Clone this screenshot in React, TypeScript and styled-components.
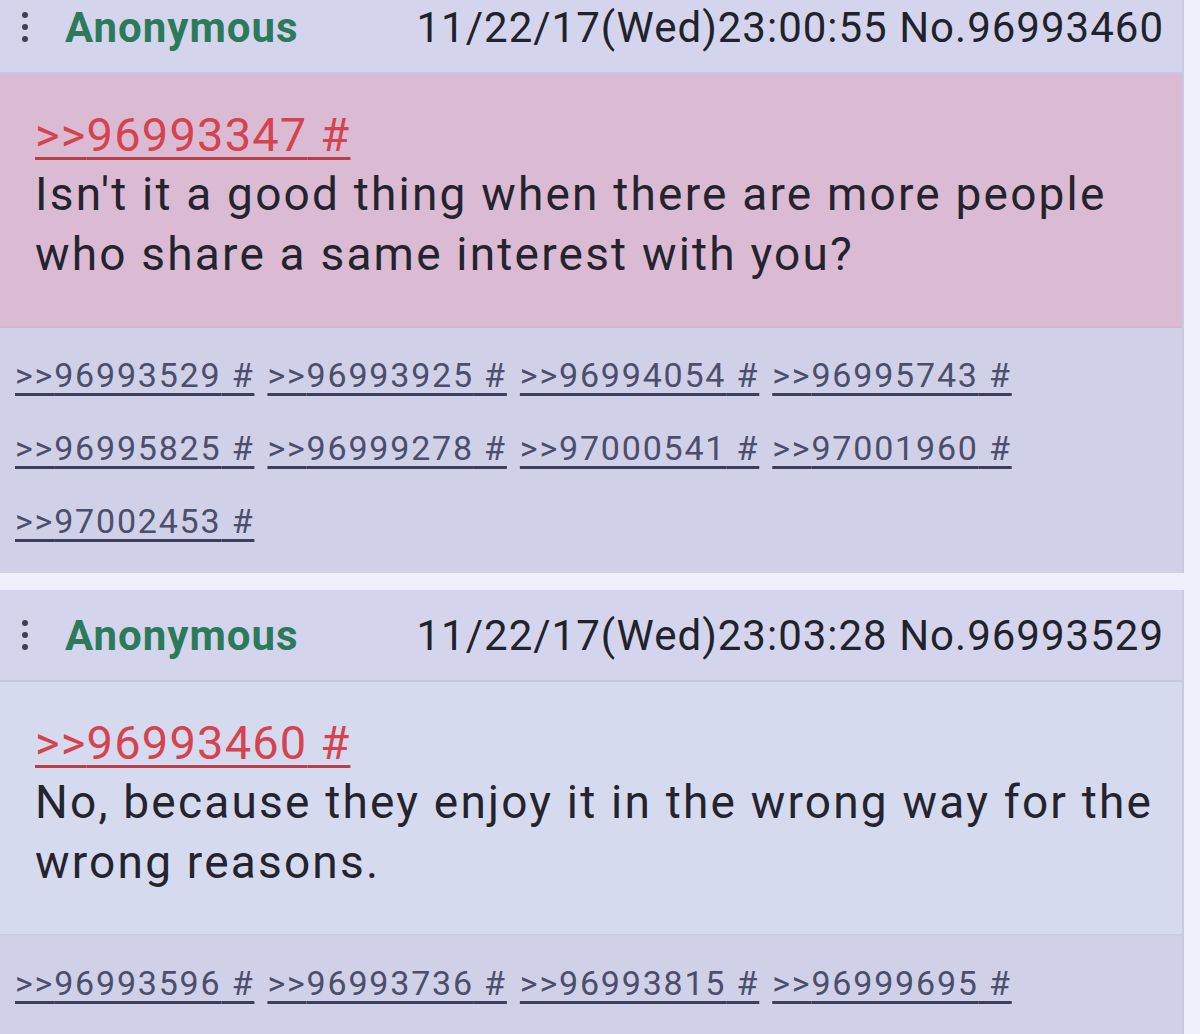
import React from 'react';
import styled, { createGlobalStyle } from 'styled-components';

const GlobalStyle = createGlobalStyle`
	html, body {
		margin: 0;
		padding: 0;
		background: #eef0fb;
		font-family: Roboto, 'Liberation Sans', Arial, sans-serif;
		overflow: hidden;
	}
`;

interface Post {
	id: number;
	time: string;
	quote: number;
	text: string;
	replies: number[];
	highlighted?: boolean;
}

const posts: Post[] = [
	{
		id: 96993460,
		time: '11/22/17(Wed)23:00:55',
		quote: 96993347,
		text: "Isn't it a good thing when there are more people who share a same interest with you?",
		replies: [
			96993529, 96993925, 96994054, 96995743, 96995825, 96999278, 97000541, 97001960, 97002453,
		],
		highlighted: true,
	},
	{
		id: 96993529,
		time: '11/22/17(Wed)23:03:28',
		quote: 96993460,
		text: 'No, because they enjoy it in the wrong way for the wrong reasons.',
		replies: [96993596, 96993736, 96993815, 96999695],
	},
];

// thread view is scrolled a little, so the first header is cut at the top
const Feed = styled.div`
	display: flex;
	flex-direction: column;
	gap: 17px;
	width: 1184px;
	margin-top: -18px;
`;

const Card = styled.article`
	display: flex;
	flex-direction: column;
	border-right: 2px solid #c9c9e0;
`;

const Header = styled.header`
	display: flex;
	align-items: center;
	justify-content: space-between;
	height: 90px;
	padding: 0 18px 0 22px;
	background: #d4d5ed;
	border-bottom: 2px solid #c6c8e2;
`;

const Author = styled.div`
	display: flex;
	align-items: center;
	gap: 37px;
`;

const Dots = styled.span`
	display: flex;
	flex-direction: column;
	gap: 6px;

	i {
		display: block;
		width: 6px;
		height: 6px;
		border-radius: 50%;
		background: #3f3f52;
	}
`;

const Name = styled.span`
	font-size: 42px;
	font-weight: 700;
	color: #2c7a5c;
	letter-spacing: 1px;
`;

const Meta = styled.span`
	font-size: 42px;
	color: #22222c;
	letter-spacing: 1px;
`;

const Body = styled.div<{ $highlighted?: boolean }>`
	display: flex;
	flex-direction: column;
	align-items: flex-start;
	min-height: 254px;
	box-sizing: border-box;
	padding: 34px 18px 30px 35px;
	background: ${(p) => (p.$highlighted ? '#dbbbd3' : '#d6daee')};
	border-bottom: 2px solid ${(p) => (p.$highlighted ? '#d3b6cf' : '#c8cbe3')};
`;

const QuoteLink = styled.a`
	font-size: 47px;
	line-height: 54px;
	color: #d4434f;
	letter-spacing: 1.2px;
	text-decoration: underline;
	text-decoration-thickness: 3px;
	text-underline-offset: 6px;
	text-decoration-color: #b8404c;
`;

const Text = styled.p`
	margin: 2px 0 0;
	font-size: 46px;
	line-height: 60px;
	letter-spacing: 2.2px;
	color: #24232e;
`;

const Replies = styled.div`
	display: flex;
	flex-wrap: wrap;
	align-content: flex-start;
	column-gap: 13px;
	row-gap: 31px;
	min-height: 245px;
	box-sizing: border-box;
	padding: 26px 40px 20px 15px;
	background: #d0d1e9;
`;

const ReplyLink = styled.a`
	font-size: 34px;
	line-height: 42px;
	letter-spacing: 1.8px;
	color: #4d4d6c;
	text-decoration: underline;
	text-decoration-thickness: 3px;
	text-underline-offset: 6px;
	text-decoration-color: #3d3d5c;
`;

const PostCard: React.FC<{ post: Post }> = ({ post }) => (
	<Card>
		<Header>
			<Author>
				<Dots>
					<i />
					<i />
					<i />
				</Dots>
				<Name>Anonymous</Name>
			</Author>
			<Meta>
				{post.time} No.{post.id}
			</Meta>
		</Header>
		<Body $highlighted={post.highlighted}>
			<QuoteLink>&gt;&gt;{post.quote} #</QuoteLink>
			<Text>{post.text}</Text>
		</Body>
		<Replies>
			{post.replies.map((r) => (
				<ReplyLink key={r}>&gt;&gt;{r} #</ReplyLink>
			))}
		</Replies>
	</Card>
);

export default function App() {
	return (
		<>
			<GlobalStyle />
			<Feed>
				{posts.map((p) => (
					<PostCard key={p.id} post={p} />
				))}
			</Feed>
		</>
	);
}
